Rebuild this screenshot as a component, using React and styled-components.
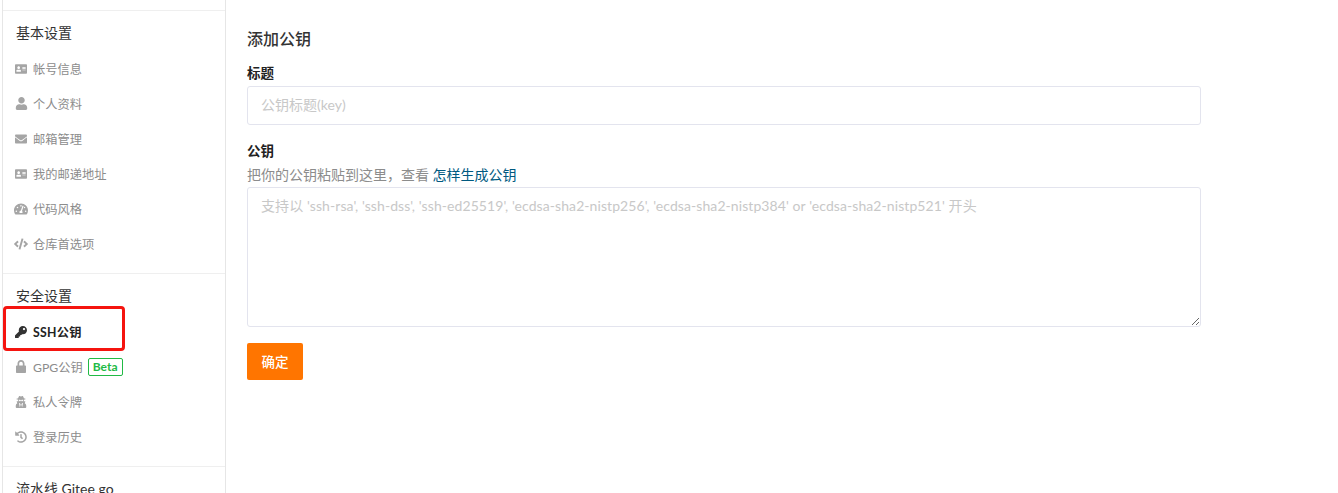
import React from 'react';
import styled, { createGlobalStyle } from 'styled-components';
import {
  FaAddressCard,
  FaUser,
  FaEnvelope,
  FaTachometerAlt,
  FaCode,
  FaKey,
  FaUserSecret,
  FaHistory,
} from 'react-icons/fa';

const GlobalStyle = createGlobalStyle`
  html, body {
    margin: 0;
    padding: 0;
    height: 493px;
    overflow: hidden;
    background: #fff;
  }
  * {
    box-sizing: border-box;
  }
  body {
    font-family: Lato, "Noto Sans CJK SC", sans-serif;
  }
`;

const Page = styled.div`
  position: relative;
  display: flex;
  height: 493px;
  padding-left: 2px;
  overflow: hidden;
`;

const Sidebar = styled.aside`
  width: 224px;
  flex: none;
  padding-top: 10px;
  border-left: 1px solid #e6e6e6;
  border-right: 1px solid #e6e6e6;
`;

const Section = styled.section`
  border-top: 1px solid #efefef;
  padding: 11px 0 12px;
`;

const SectionTitle = styled.h3`
  margin: 0 0 8px 13px;
  height: 21px;
  font-size: 14px;
  line-height: 21px;
  font-weight: 400;
  color: #333;
`;

const Item = styled.div`
  display: flex;
  align-items: center;
  height: 35px;
  padding-left: 12px;
  font-size: 12.25px;
  letter-spacing: ${(p) => (p.$active ? '0.25px' : '0')};
  font-weight: ${(p) => (p.$active ? 700 : 400)};
  color: ${(p) => (p.$active ? '#222' : '#8c8c8c')};
`;

const IconSlot = styled.span`
  display: flex;
  align-items: center;
  justify-content: center;
  width: 12px;
  height: 14px;
  margin-right: 6px;
  flex: none;
  color: ${(p) => (p.$active ? '#333' : '#a5a5a5')};

  svg {
    flex: none;
  }
`;

const Badge = styled.span`
  margin-left: 5px;
  padding: 0 4px;
  height: 18px;
  line-height: 16px;
  font-size: 12px;
  font-weight: 700;
  color: #21ba45;
  border: 1px solid #21ba45;
  border-radius: 2px;
`;

const Highlight = styled.div`
  position: absolute;
  left: 3px;
  top: 306px;
  width: 122px;
  height: 45px;
  border: 3px solid #f5140f;
  border-radius: 4px;
  pointer-events: none;
`;

const Main = styled.main`
  width: 954px;
  margin-left: 21px;
  padding-top: 27px;
`;

const Title = styled.h2`
  margin: 0 0 12px;
  height: 24px;
  font-size: 16px;
  line-height: 24px;
  font-weight: 500;
  color: #333;
`;

const Label = styled.label`
  display: block;
  height: 20px;
  font-size: 13.5px;
  line-height: 21px;
  font-weight: 700;
  color: #222;
`;

const Field = styled.div`
  margin-bottom: 16px;
`;

const TitleLabel = styled(Label)`
  margin-bottom: 3px;
`;

const Hint = styled.div`
  height: 20px;
  margin: 4px 0 2px;
  font-size: 14px;
  line-height: 20px;
  color: #8c8c8c;

  a {
    color: #005980;
    text-decoration: none;
  }
`;

const TextInput = styled.input`
  display: block;
  width: 100%;
  height: 39px;
  padding: 0 13px 2px;
  border: 1px solid #e3e4ee;
  border-radius: 3px;
  font-family: inherit;
  font-size: 14px;
  outline: none;
  color: #333;

  &::placeholder {
    color: #c8c8c8;
    opacity: 1;
  }
`;

const TextArea = styled.textarea`
  display: block;
  width: 100%;
  height: 140px;
  padding: 8px 13px;
  border: 1px solid #e3e4ee;
  border-radius: 3px;
  font-family: inherit;
  font-size: 14px;
  line-height: 19px;
  letter-spacing: 0.08px;
  outline: none;
  color: #333;

  &::placeholder {
    color: #c8c8c8;
    opacity: 1;
  }
`;

const SubmitButton = styled.button`
  display: block;
  width: 56px;
  height: 37px;
  padding: 0 0 1px;
  border: 0;
  border-radius: 2px;
  background: #ff7500;
  color: #fff;
  font-family: inherit;
  font-size: 13.5px;
  font-weight: 500;
`;

// FA4 style padlock, the one in the package is too squat
const LockIcon = () => (
  <svg width="10" height="13" viewBox="0 0 10 13" fill="currentColor" aria-hidden="true">
    <path d="M5 0C2.9 0 1.5 1.5 1.5 3.6V5.5H1C.4 5.5 0 5.9 0 6.5v5.5c0 .6.4 1 1 1h8c.6 0 1-.4 1-1V6.5c0-.6-.4-1-1-1h-.5V3.6C8.5 1.5 7.1 0 5 0zm0 1.7c1.1 0 1.8.8 1.8 2v1.8H3.2V3.7c0-1.2.7-2 1.8-2z" />
  </svg>
);

const basicItems = [
  { icon: FaAddressCard, size: 12, label: '帐号信息' },
  { icon: FaUser, size: 13, label: '个人资料' },
  { icon: FaEnvelope, size: 12, label: '邮箱管理' },
  { icon: FaAddressCard, size: 12, label: '我的邮递地址' },
  { icon: FaTachometerAlt, size: 14, label: '代码风格' },
  { icon: FaCode, size: 14, label: '仓库首选项' },
];

const securityItems = [
  { icon: FaKey, size: 12, label: 'SSH公钥', active: true },
  { icon: LockIcon, label: 'GPG公钥', badge: 'Beta' },
  { icon: FaUserSecret, size: 12, label: '私人令牌' },
  { icon: FaHistory, size: 12, label: '登录历史' },
];

const NavList = ({ items }) =>
  items.map(({ icon: Icon, size, label, active, badge }) => (
    <Item key={label} $active={active}>
      <IconSlot $active={active}>
        <Icon size={size} />
      </IconSlot>
      {label}
      {badge && <Badge>{badge}</Badge>}
    </Item>
  ));

const App = () => (
  <Page>
    <GlobalStyle />
    <Sidebar>
      <Section>
        <SectionTitle>基本设置</SectionTitle>
        <NavList items={basicItems} />
      </Section>
      <Section>
        <SectionTitle>安全设置</SectionTitle>
        <NavList items={securityItems} />
      </Section>
      <Section>
        <SectionTitle>流水线 Gitee go</SectionTitle>
      </Section>
    </Sidebar>
    <Highlight />
    <Main>
      <Title>添加公钥</Title>
      <Field>
        <TitleLabel>标题</TitleLabel>
        <TextInput placeholder="公钥标题(key)" />
      </Field>
      <Field>
        <Label>公钥</Label>
        <Hint>
          把你的公钥粘贴到这里，查看 <a href="#how">怎样生成公钥</a>
        </Hint>
        <TextArea placeholder="支持以 'ssh-rsa', 'ssh-dss', 'ssh-ed25519', 'ecdsa-sha2-nistp256', 'ecdsa-sha2-nistp384' or 'ecdsa-sha2-nistp521' 开头" />
      </Field>
      <SubmitButton>确定</SubmitButton>
    </Main>
  </Page>
);

export default App;
